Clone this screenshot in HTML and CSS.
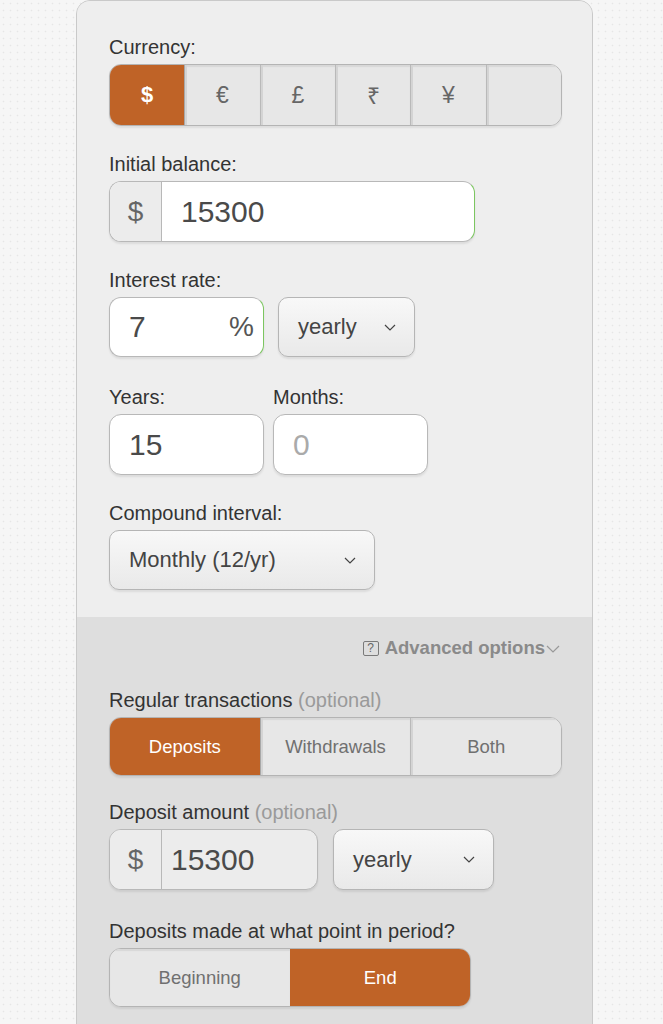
FILE: index.html
```html
<!DOCTYPE html>
<html lang="en">
<head>
<meta charset="utf-8">
<title>Compound interest calculator</title>
<link rel="stylesheet" href="styles.css">
</head>
<body>
<div class="card">
  <div class="section upper">
    <div class="field">
      <div class="label">Currency:</div>
      <div class="seg seg-currency">
        <div class="seg-item active">$</div>
        <div class="seg-item">€</div>
        <div class="seg-item">£</div>
        <div class="seg-item">₹</div>
        <div class="seg-item">¥</div>
        <div class="seg-item"></div>
      </div>
    </div>

    <div class="field">
      <div class="label">Initial balance:</div>
      <div class="input-group w-initial valid">
        <span class="prefix">$</span>
        <span class="value">15300</span>
      </div>
    </div>

    <div class="field f-rate">
      <div class="label">Interest rate:</div>
      <div class="row">
        <div class="input-group w-rate valid">
          <span class="value grow">7</span>
          <span class="suffix">%</span>
        </div>
        <div class="select w-rate-sel">
          <span>yearly</span>
          <svg class="chev" width="12" height="7" viewBox="0 0 12 7"><path d="M1 1l5 5 5-5" fill="none" stroke="#444" stroke-width="1.2"/></svg>
        </div>
      </div>
    </div>

    <div class="field">
      <div class="row row-tight">
        <div class="col">
          <div class="label">Years:</div>
          <div class="input-group w-half">
            <span class="value">15</span>
          </div>
        </div>
        <div class="col">
          <div class="label">Months:</div>
          <div class="input-group w-half">
            <span class="value placeholder">0</span>
          </div>
        </div>
      </div>
    </div>

    <div class="field last">
      <div class="label">Compound interval:</div>
      <div class="select w-compound">
        <span>Monthly (12/yr)</span>
        <svg class="chev" width="12" height="7" viewBox="0 0 12 7"><path d="M1 1l5 5 5-5" fill="none" stroke="#444" stroke-width="1.2"/></svg>
      </div>
    </div>
  </div>

  <div class="section lower">
    <div class="advanced">
      <span class="qbox">?</span>
      <span class="adv-text">Advanced options</span>
      <svg class="adv-chev" width="14" height="8" viewBox="0 0 14 8"><path d="M1 1l6 6 6-6" fill="none" stroke="#999" stroke-width="1.2"/></svg>
    </div>

    <div class="field f-regular">
      <div class="label">Regular transactions <span class="opt">(optional)</span></div>
      <div class="seg seg-small">
        <div class="seg-item active">Deposits</div>
        <div class="seg-item">Withdrawals</div>
        <div class="seg-item">Both</div>
      </div>
    </div>

    <div class="field f-deposit">
      <div class="label">Deposit amount <span class="opt">(optional)</span></div>
      <div class="row row-wide">
        <div class="input-group w-deposit grey">
          <span class="prefix">$</span>
          <span class="value tight">15300</span>
        </div>
        <div class="select w-deposit-sel">
          <span>yearly</span>
          <svg class="chev" width="12" height="7" viewBox="0 0 12 7"><path d="M1 1l5 5 5-5" fill="none" stroke="#444" stroke-width="1.2"/></svg>
        </div>
      </div>
    </div>

    <div class="field last">
      <div class="label">Deposits made at what point in period?</div>
      <div class="seg seg-small w-point">
        <div class="seg-item">Beginning</div>
        <div class="seg-item active">End</div>
      </div>
    </div>
  </div>
</div>
</body>
</html>
```

FILE: styles.css
```css
* { box-sizing: border-box; }

html, body {
  margin: 0;
  padding: 0;
}

body {
  background-color: #f6f6f6;
  background-image: radial-gradient(#e6e6e6 0.7px, transparent 1.1px);
  background-size: 7px 7px;
  font-family: "Liberation Sans", Arial, Helvetica, sans-serif;
  color: #333;
  height: 1024px;
  overflow: hidden;
}

.card {
  margin-left: 76px;
  width: 517px;
  border: 1px solid #c9c9c9;
  border-radius: 14px 14px 0 0;
  overflow: hidden;
  min-height: 1100px;
  background: #dedede;
}

.section.upper {
  background: #eeeeee;
  padding: 34px 30px 27px 32px;
}

.section.lower {
  background: #dedede;
  padding: 19px 30px 40px 32px;
}

.field { margin-bottom: 26px; }
.field.last { margin-bottom: 0; }
.field.f-rate { margin-bottom: 28px; }
.field.f-regular { margin-bottom: 24px; }
.field.f-deposit { margin-bottom: 29px; }

.label {
  font-size: 20px;
  line-height: 24px;
  height: 24px;
  margin-bottom: 5px;
  color: #333;
  white-space: nowrap;
}

.opt { color: #9a9a9a; }

.row { display: flex; gap: 14px; align-items: flex-start; }
.row.row-tight { gap: 9px; }
.row.row-wide { gap: 15px; }
.col { display: flex; flex-direction: column; }

/* segmented controls */
.seg {
  display: flex;
  height: 62px;
  border: 1px solid #b4b4b4;
  border-radius: 12px;
  overflow: hidden;
  background: #e6e6e6;
  box-shadow: 0 2px 2px rgba(0,0,0,0.07);
}
.seg-currency { width: 453px; }
.seg-small { height: 59px; width: 453px; }
.seg-small.w-point { width: 362px; }

.seg-item {
  flex: 1 1 0;
  display: flex;
  align-items: center;
  justify-content: center;
  background: #e7e7e7;
  color: #707070;
  border-left: 1px solid #b9b9b9;
  box-shadow: inset 2px 0 0 #d4d4d4, inset 0 2px 1px #d8d8d8;
  font-size: 18.5px;
}
.seg-item:first-child { border-left: none; box-shadow: inset 0 2px 1px #d8d8d8; }
.seg-currency .seg-item { font-size: 23px; color: #666; }

.seg-item.active {
  background: #bf6327;
  color: #fff;
  box-shadow: none;
  border-left-color: #bf6327;
}
.seg-currency .seg-item.active { color: #fff; font-weight: bold; font-size: 22px; }
.seg-item.active + .seg-item { border-left-color: #a8a8a8; }

/* inputs */
.input-group {
  display: flex;
  align-items: stretch;
  height: 61px;
  background: #fff;
  border: 1px solid #b8b8b8;
  border-radius: 12px;
  overflow: hidden;
  box-shadow: 0 2px 2px rgba(0,0,0,0.08);
}
.input-group.valid { border-right: 1px solid #7cc660; }
.input-group.grey { background: #ececec; height: 61px; }

.w-initial { width: 366px; }
.w-rate { width: 155px; height: 60px; }
.w-half { width: 155px; }
.w-deposit { width: 209px; }

.prefix {
  width: 52px;
  flex: none;
  display: flex;
  align-items: center;
  justify-content: center;
  background: #ececec;
  color: #666;
  font-size: 28px;
  border-right: 1px solid #b8b8b8;
}

.value {
  display: flex;
  align-items: center;
  padding-left: 19px;
  font-size: 30px;
  color: #4a4a4a;
}
.value.tight { padding-left: 9px; }
.value.grow { flex: 1; }
.value.placeholder { color: #aaa; }

.suffix {
  display: flex;
  align-items: center;
  padding-right: 9px;
  font-size: 28px;
  color: #555;
}

/* selects */
.select {
  display: flex;
  align-items: center;
  justify-content: space-between;
  height: 61px;
  padding: 0 18px 0 19px;
  border: 1px solid #b5b5b5;
  border-radius: 10px;
  background: linear-gradient(#f8f8f8, #e9e9e9);
  box-shadow: 0 2px 2px rgba(0,0,0,0.08);
  font-size: 22px;
  color: #444;
}
.w-rate-sel { width: 137px; height: 60px; }
.w-compound { width: 266px; height: 60px; }
.w-deposit-sel { width: 161px; height: 61px; }
.chev { flex: none; }

/* advanced */
.advanced {
  display: flex;
  align-items: center;
  justify-content: flex-end;
  height: 24px;
  margin-bottom: 28px;
  margin-right: 2px;
  color: #8a8a8a;
}
.qbox {
  width: 16px;
  height: 15px;
  border: 1px solid #7a7a7a;
  border-radius: 2px;
  font-size: 12px;
  line-height: 13px;
  text-align: center;
  color: #666;
  margin-right: 6px;
}
.adv-text {
  font-weight: bold;
  font-size: 18.5px;
  color: #8a8a8a;
}
.adv-chev { margin-left: 1px; margin-top: 2px; }
```
